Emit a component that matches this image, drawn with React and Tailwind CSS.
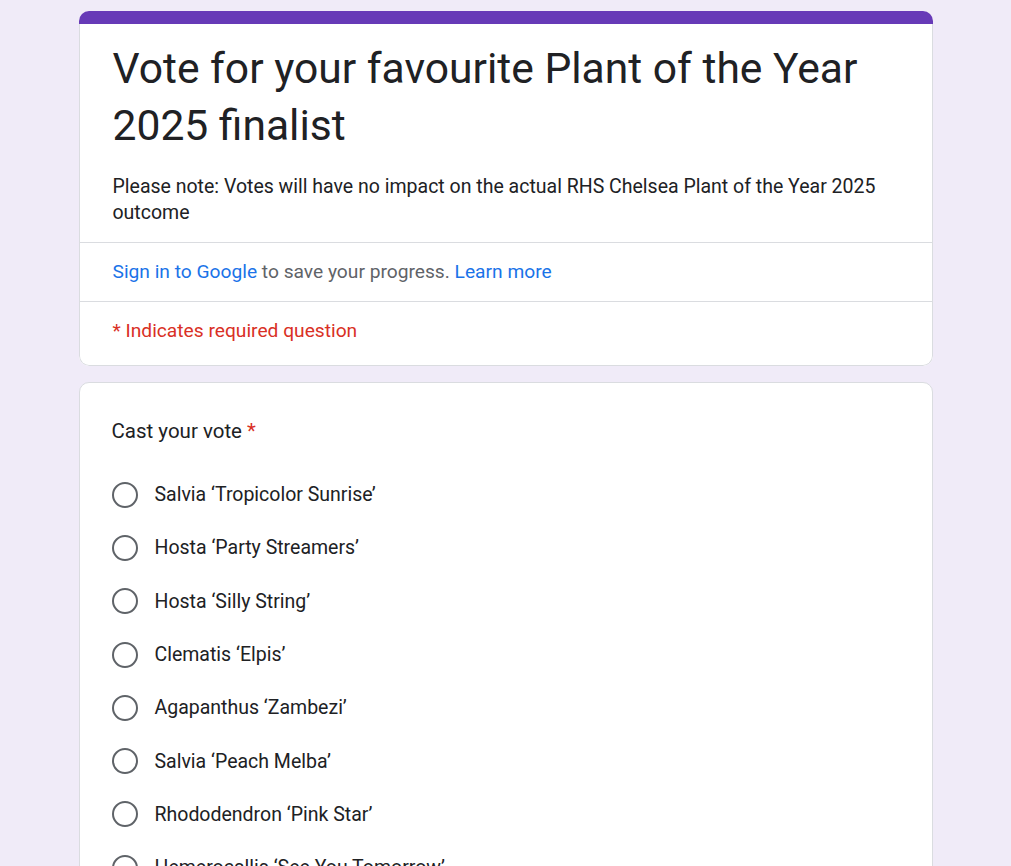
import React from 'react';

const options = [
    'Salvia ‘Tropicolor Sunrise’',
    'Hosta ‘Party Streamers’',
    'Hosta ‘Silly String’',
    'Clematis ‘Elpis’',
    'Agapanthus ‘Zambezi’',
    'Salvia ‘Peach Melba’',
    'Rhododendron ‘Pink Star’',
    'Hemerocallis ‘See You Tomorrow’',
];

const Radio = () => (
    <div className="w-[26px] h-[26px] rounded-full border-[2.5px] border-[#5f6368] shrink-0" />
);

const App = () => {
    return (
        <div
            className="min-h-[866px] bg-[#f0ebf8] pt-[11px] pb-10 text-[#202124]"
            style={{ fontFamily: 'Roboto, "Liberation Sans", Arial, sans-serif' }}
        >
            <div className="w-[854px] mx-auto">
                {/* header card */}
                <div className="rounded-[10px] overflow-hidden bg-white">
                    <div className="h-[13px] bg-[#673ab7]" />
                    <div className="border-x border-b border-[#dadce0] rounded-b-[10px]">
                        <div className="px-[33px] pt-[16px] pb-[16px]">
                            <h1 className="text-[42.6px] leading-[57px] font-normal">
                                Vote for your favourite Plant of the Year 2025 finalist
                            </h1>
                            <p className="mt-[20px] text-[19.5px] leading-[26px]">
                                Please note: Votes will have no impact on the actual RHS Chelsea Plant of the Year 2025 outcome
                            </p>
                        </div>
                        <div className="border-t border-[#dadce0] px-[33px] pt-[16px] pb-[17px] text-[19.2px] leading-[25px] text-[#5f6368]">
                            <span className="text-[#1a73e8]">Sign in to Google</span> to save your progress.{' '}
                            <span className="text-[#1a73e8]">Learn more</span>
                        </div>
                        <div className="border-t border-[#dadce0] px-[33px] pt-[16px] pb-[22px] text-[19.2px] leading-[25px] text-[#d93025]">
                            * Indicates required question
                        </div>
                    </div>
                </div>

                {/* question card */}
                <div className="mt-[16px] bg-white border border-[#dadce0] rounded-[10px] px-[32px] pt-[33px] pb-6">
                    <div className="text-[20.5px] leading-[30px]">
                        Cast your vote <span className="text-[#d93025]">*</span>
                    </div>
                    <div className="mt-[22px]">
                        {options.map(o => (
                            <div key={o} className="h-[53.3px] flex items-center gap-[17px]">
                                <Radio />
                                <span className="text-[19.5px] leading-[25px]">{o}</span>
                            </div>
                        ))}
                    </div>
                </div>
            </div>
        </div>
    );
};

export default App;
